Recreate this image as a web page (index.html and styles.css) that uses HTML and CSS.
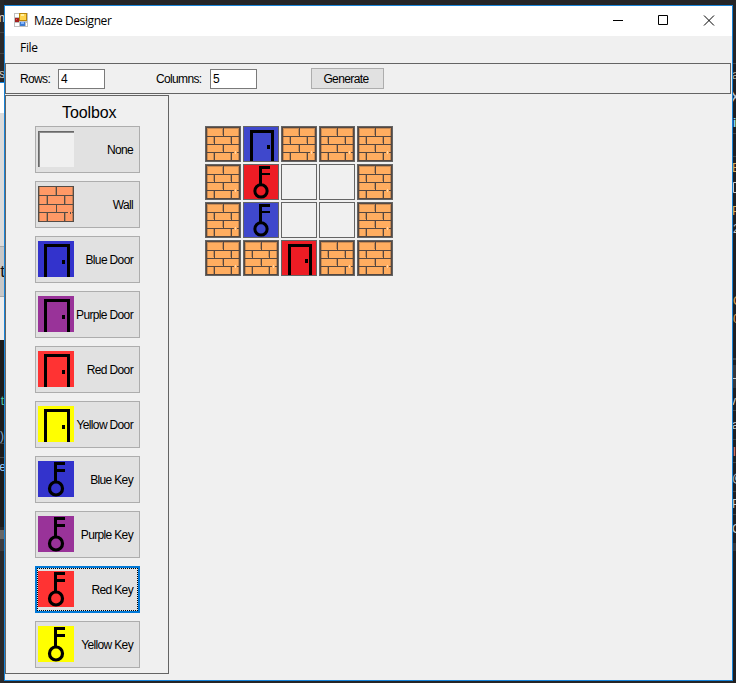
FILE: index.html
```
<!DOCTYPE html>
<html lang="en">
<head>
<meta charset="utf-8">
<title>Maze Designer</title>
<link rel="stylesheet" href="styles.css">
</head>
<body>
<svg class="defs" width="0" height="0" aria-hidden="true">
  <symbol id="door" viewBox="0 0 36 36"><path d="M6 36V3H32V36H29V6H9V36Z"/><path d="M24 19h3v4h-3z"/></symbol>
  <symbol id="key" viewBox="0 0 36 36"><path d="M16 1H27V4H19V8H27V11H19V21H16Z"/><circle cx="18" cy="27.500" r="6.500" fill="none" stroke="#000" stroke-width="3.200" shape-rendering="geometricPrecision"/></symbol>
  <symbol id="wall" viewBox="0 0 36 36"><path fill="none" stroke="#c08058" d="M1.500 1V35M17.500 1V9M34.500 1V35M8.500 10V18M27.500 10V18M8.500 27V35M27.500 27V35"/><path fill="none" stroke="#554c46" d="M.5 .5H35.500V35.500H.5ZM0 9.500H36M0 18.500H36M0 26.500H30M34 26.500h2M18.500 0V9M9.500 9V18M26.500 9V18M18.500 18V26M9.500 26V36M26.500 26V36M32.500 26v2"/></symbol>
  <symbol id="tilewall" viewBox="1 1 34 34"><path fill="none" stroke="#c98a52" d="M2.500 2V34M33.500 2V34M2 2.500H34M17.500 2V9M8.500 11V17M25.500 11V17M17.500 19V25M8.500 27V34M25.500 27V34"/><path fill="none" stroke="#554740" d="M1.500 1.500H34.500V34.500H1.500ZM1 10.500H35M1 18.500H35M1 26.500H29M32 26.500h3M18.500 2V10M9.500 10V18M26.500 10V18M18.500 18V26M9.500 26V34M26.500 26V34"/><path d="M30.500 25v3" stroke="#ffd5a5"/></symbol>
</svg>
<svg class="edge" width="4" height="683" viewBox="0 0 4 683">
  <path fill="#29292b" d="M0 0h4v683H0z"/><path fill="#444" d="M0 32h4v1H0zM0 53h4v1H0z"/>
  <path fill="#1883d7" d="M0 82h4v1H0z"/><path fill="#fff" d="M0 83h4v30H0z"/><path fill="#dcdcdc" d="M0 113h4v133H0z"/><path fill="#aaa" d="M0 246h4v1H0z"/><path fill="#c8c8c8" d="M0 247h4v49H0z"/><path fill="#aaa" d="M0 296h4v1H0z"/><path fill="#eee" d="M0 297h4v43H0z"/><path fill="#1c1c1c" d="M0 340h4v187H0z"/><path fill="#444" d="M0 443h4v1H0zM0 457h4v1H0z"/><path fill="#666" d="M0 530h4v9H0z"/><path fill="#3c3c40" d="M0 539h4v12H0z"/>
  <g font-size="12" text-anchor="end"><text x="5" y="22" fill="#ddd">m</text><text x="5" y="78" fill="#ccc">s</text><text x="5" y="277" font-size="17" fill="#111">t</text><text x="4" y="405" fill="#4ec9b0">t</text><text x="4" y="440" fill="#8ac">)</text><text x="6" y="471" fill="#9cf">e</text></g>
</svg>
<main class="window">
  <header class="titlebar">
    <svg class="appicon" width="14" height="14" viewBox="0 0 14 14"><path fill="#c0c0c0" d="M0 0h14v14H0z"/><path fill="#fff" d="M1 1h4v3H1zM1 10h4v3H1zM12 10h1v3h-1z"/><path fill="#b8860b" d="M5 0h8v8H5z"/><path fill="#ffd34a" d="M6 1h6v6H6z"/><path fill="#fff0a0" d="M7 1h3v2H7z"/><path fill="#a32020" d="M1 5h4v4H1z"/><path fill="#e45b4f" d="M2 6h1v1H2z"/><path fill="#3d7bd0" d="M6 9h5v4H6z"/><path fill="#82b5ff" d="M7 9h3v2H7z"/></svg>
    <h1>Maze Designer</h1>
    <svg class="controls" width="102" height="11" viewBox="0 0 102 11" fill="none" stroke="#000"><path d="M0 5.500H10M45.500 .5H54.500V9.500H45.500Z"/><path d="M91 .5L101 10.500M101 .5L91 10.500"/></svg>
  </header>
  <nav class="menu"><span>File</span></nav>
  <section class="bar">
    <label class="rows"><span>Rows:</span></label><div class="input">4</div>
    <label class="cols"><span>Columns:</span></label><div class="input">5</div>
    <button class="generate">Generate</button>
  </section>
  <div class="content">
    <aside class="toolbox">
      <h2>Toolbox</h2>
      <button class="tool"><span class="icon none"></span><span>None</span></button>
      <button class="tool"><svg class="icon brick"><use href="#wall"/></svg><span>Wall</span></button>
      <button class="tool"><svg class="icon blue"><use href="#door"/></svg><span>Blue Door</span></button>
      <button class="tool"><svg class="icon purple"><use href="#door"/></svg><span>Purple Door</span></button>
      <button class="tool"><svg class="icon red"><use href="#door"/></svg><span>Red Door</span></button>
      <button class="tool"><svg class="icon yellow"><use href="#door"/></svg><span>Yellow Door</span></button>
      <button class="tool"><svg class="icon blue"><use href="#key"/></svg><span>Blue Key</span></button>
      <button class="tool"><svg class="icon purple"><use href="#key"/></svg><span>Purple Key</span></button>
      <button class="tool selected"><svg class="icon red"><use href="#key"/></svg><span>Red Key</span></button>
      <button class="tool"><svg class="icon yellow"><use href="#key"/></svg><span>Yellow Key</span></button>
    </aside>
    <section class="maze">
      <svg class="cell brick"><use href="#tilewall"/></svg><svg class="cell blue"><use href="#door"/></svg><svg class="cell brick"><use href="#tilewall"/></svg><svg class="cell brick"><use href="#tilewall"/></svg><svg class="cell brick"><use href="#tilewall"/></svg>
      <svg class="cell brick"><use href="#tilewall"/></svg><svg class="cell red"><use href="#key"/></svg><div class="cell"></div><div class="cell"></div><svg class="cell brick"><use href="#tilewall"/></svg>
      <svg class="cell brick"><use href="#tilewall"/></svg><svg class="cell blue"><use href="#key"/></svg><div class="cell"></div><div class="cell"></div><svg class="cell brick"><use href="#tilewall"/></svg>
      <svg class="cell brick"><use href="#tilewall"/></svg><svg class="cell brick"><use href="#tilewall"/></svg><svg class="cell red"><use href="#door"/></svg><svg class="cell brick"><use href="#tilewall"/></svg><svg class="cell brick"><use href="#tilewall"/></svg>
    </section>
  </div>
</main>
<svg class="edge" width="3" height="683" viewBox="0 0 3 683">
  <path fill="#1f1f22" d="M0 60h3v623H0z"/><path fill="#444" d="M0 63h3v1H0zM0 133h3v1H0zM0 156h3v1H0zM0 358h3v2H0zM0 410h3v1H0zM0 439h3v1H0zM0 462h3v1H0zM0 491h3v1H0zM0 514h3v1H0z"/><path fill="#38383c" d="M0 365h3v23H0zM0 543h3v8H0z"/>
  <g font-size="12" fill="#ccc"><text x="-1" y="79" fill="#b5ad98">a</text><text x="-3" y="103" font-size="16">X</text><text x="0" y="127" fill="#8de" font-weight="bold">i</text><text x="-1" y="172" fill="#e0b060">E</text><path d="M3 182.500H.5V192.500H3" fill="none" stroke="#ccc"/><text x="-1" y="215" fill="#e0b060">P</text><text x="0" y="233">2</text><text x="0" y="305" fill="#e0a050">C</text><text x="0" y="323" fill="#e0a050">0</text><path d="M0 378h3v1H0z"/><text x="-3" y="405">v</text><text x="-1" y="429">a</text><text x="0" y="456" fill="#e88">l</text><text x="-1" y="482">@</text><text x="-1" y="508">P</text><text x="-1" y="533">C</text></g>
</svg>
</body>
</html>
```
FILE: styles.css
```
* { box-sizing: border-box; }
body { margin: 0; width: 736px; height: 683px; overflow: hidden; background: #252527; display: flex; font: 12px/14px "Liberation Sans", sans-serif; color: #000; }
.defs { position: absolute; }
.edge { flex: none; overflow: hidden; }
.window { width: 729px; height: 676px; margin-top: 5px; border: 1px solid #1883d7; background: #f0f0f0; flex: none; }
.titlebar { height: 30px; background: #fff; display: flex; align-items: center; padding: 0 17px 0 9px; }
.appicon { margin-top: -2px; }
h1 { margin: 0 0 0 6px; font: 12px/16px "Open Sans", sans-serif; letter-spacing: -.4px; flex: 1; }
.controls { margin-top: -1px; }
.menu { height: 27px; padding: 4px 15px; font: 12px/16px "Open Sans", sans-serif; letter-spacing: -.3px; }
.bar { width: 726px; height: 31px; border: 1px solid #646464; display: flex; align-items: center; padding-left: 14px; }
.bar label { letter-spacing: -.65px; }
.rows { width: 38px; }
.cols { width: 54px; margin-left: 51px; }
.input { width: 47px; height: 20px; border: 1px solid #7a7a7a; background: #fff; padding: 2px; }
button { font: inherit; color: inherit; border: 1px solid #adadad; background: #e1e1e1; margin: 0; padding: 0; }
.generate { width: 73px; height: 21px; margin-left: 54px; letter-spacing: -.6px; padding-right: 3px; }
.content { display: flex; margin-top: 1px; }
.toolbox { width: 164px; height: 579px; border: 1px solid #646464; padding-left: 29px; }
h2 { margin: 0 0 0 27px; font-weight: 400; font-size: 16px; line-height: 18px; padding-top: 8px; height: 30px; letter-spacing: -.1px; }
.tool { width: 105px; height: 47px; margin-bottom: 8px; padding: 0 6px 0 2px; display: flex; align-items: center; justify-content: space-between; letter-spacing: -.65px; white-space: nowrap; position: relative; }
.icon { width: 36px; height: 36px; margin-bottom: 1px; flex: none; shape-rendering: crispEdges; }
.none { background: #f0f0f0; border-top: 1px solid #696969; border-left: 1px solid #696969; box-shadow: inset 1px 1px #8c8c8c; }
.tool .brick { background: #ff9966; }
.tool .blue { background: #3333cc; }
.tool .purple { background: #993399; }
.tool .red { background: #ff3333; }
.tool .yellow { background: #ff0; }
.selected { border: 2px solid #0078d7; padding: 0 5px 0 1px; }
.selected::after { content: ""; position: absolute; inset: 0; border: 1px dotted #000; }
.maze { display: grid; grid-template-columns: repeat(5, 36px); grid-auto-rows: 36px; gap: 2px; margin: 31px 0 0 36px; height: 150px; }
.cell { width: 36px; height: 36px; border: 1px solid #646464; shape-rendering: crispEdges; }
.cell.brick { background: #ffad60; }
.cell.blue { background: #3f48cc; }
.cell.red { background: #ed1c24; }
```
